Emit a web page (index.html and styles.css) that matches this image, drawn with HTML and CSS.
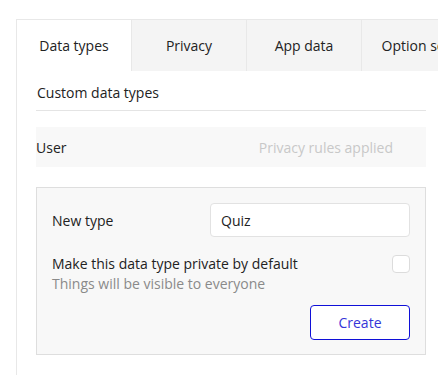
FILE: index.html
```html
<html>
<head>
<meta charset="UTF-8">
<link rel="stylesheet" href="styles.css">
<title>Data</title>
</head>
<body>
	<div class="panel">
		<div class="tabs">
			<div class="tab active">Data types</div>
			<div class="tab">Privacy</div>
			<div class="tab">App data</div>
			<div class="tab">Option sets</div>
		</div>
		<div class="content">
			<div class="section-title">Custom data types</div>
			<div class="type-row">
				<span>User</span>
				<span class="rules">Privacy rules applied</span>
			</div>
			<div class="newbox">
				<div class="field">
					<label>New type</label>
					<input class="textbox" type="text" value="Quiz">
				</div>
				<div class="private">
					<div>
						<div>Make this data type private by default</div>
						<div class="hint">Things will be visible to everyone</div>
					</div>
					<span class="check"></span>
				</div>
				<div class="actions">
					<button class="create">Create</button>
				</div>
			</div>
		</div>
	</div>
</body>
</html>
```

FILE: styles.css
```css
html{
	overflow: hidden;
}
body{
	margin: 0;
	padding: 19px 0 0 16px;
	font-family: "Open Sans", sans-serif;
	font-size: 14px;
	color: #222;
	background: #fff;
	overflow: hidden;
	height: 375px;
	box-sizing: border-box;
}
.panel{
	width: 422px;
	height: 356px;
	box-sizing: border-box;
	overflow: hidden;
	border-top: 1px solid #e8e8e8;
	border-left: 1px solid #e8e8e8;
}
.tabs{
	display: flex;
	height: 51px;
}
.tab{
	width: 114px;
	flex-shrink: 0;
	display: flex;
	align-items: center;
	justify-content: center;
	background: #f4f4f4;
	border-left: 1px solid #e8e8e8;
	white-space: nowrap;
}
.tab.active{
	background: #fff;
	border-left: none;
}
.content{
	width: 390px;
	padding-left: 19px;
}
.section-title{
	height: 39px;
	line-height: 44px;
	padding-left: 1px;
	border-bottom: 1px solid #e4e4e4;
}
.type-row{
	margin-top: 16px;
	height: 40px;
	background: #f8f8f8;
	display: flex;
	align-items: center;
	justify-content: space-between;
	padding-right: 33px;
}
.rules{
	color: #c8c8c8;
}
.newbox{
	margin-top: 20px;
	border: 1px solid #dedede;
	background: #f8f8f8;
	padding: 15px 15px 14px 15px;
}
.field{
	display: flex;
	align-items: center;
	justify-content: space-between;
}
.textbox{
	width: 200px;
	height: 34px;
	box-sizing: border-box;
	border: 1px solid #e2e2e2;
	border-radius: 4px;
	background: #fff;
	padding: 0 10px;
	font-family: "Open Sans", sans-serif;
	font-size: 14px;
	color: #222;
	outline: none;
}
.private{
	display: flex;
	justify-content: space-between;
	align-items: flex-start;
	margin-top: 17px;
	line-height: 20px;
}
.hint{
	color: #8a8a8a;
}
.check{
	width: 18px;
	height: 18px;
	box-sizing: border-box;
	border: 1px solid #dcdcdc;
	border-radius: 4px;
	background: #fff;
	margin-top: 1px;
}
.actions{
	display: flex;
	justify-content: flex-end;
	margin-top: 11px;
}
.create{
	width: 100px;
	height: 35px;
	border: 1px solid #1010d8;
	border-radius: 4px;
	background: #fff;
	color: #3535d8;
	font-family: "Open Sans", sans-serif;
	font-size: 14px;
}
```
